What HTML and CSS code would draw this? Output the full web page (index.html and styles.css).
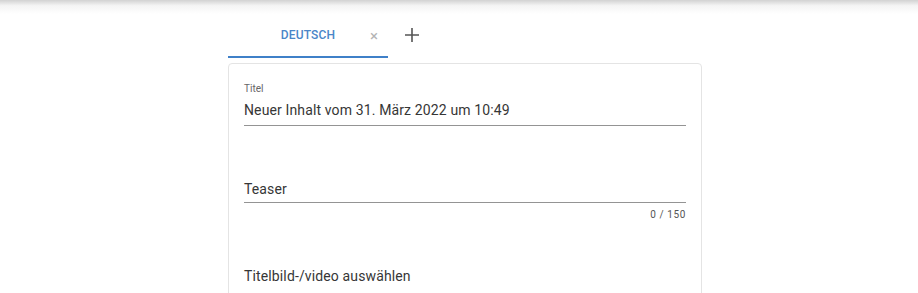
FILE: index.html
```html
<html>
<head>
<meta http-equiv="Content-Type" content="text/html; charset=utf-8" />
<link rel="stylesheet" href="styles.css">
</head>
<body>
<div class="headerShade"></div>
<div class="editor">
    <div class="tabBar">
        <div class="tab active">
            <span class="tabLabel">DEUTSCH</span>
            <span class="tabClose">&times;</span>
        </div>
        <div class="tabAdd">
            <svg width="14" height="14" viewBox="0 0 14 14"><path d="M7 0v14M0 7h14" stroke="#555" stroke-width="1.6" fill="none"/></svg>
        </div>
    </div>
    <div class="card">
        <div class="field titleField">
            <label class="fieldLabel">Titel</label>
            <div class="fieldInput">Neuer Inhalt vom 31. März 2022 um 10:49</div>
        </div>
        <div class="field teaserField">
            <div class="fieldInput">Teaser</div>
            <div class="counter">0 / 150</div>
        </div>
        <div class="mediaPick">Titelbild-/video auswählen</div>
    </div>
</div>
</body>
</html>
```

FILE: styles.css
```css
html {
    background-color: #FFF;
}
body {
    margin: 0;
    font-family: Roboto, 'Noto Sans', sans-serif;
    color: #363636;
    overflow: hidden;
}
.headerShade {
    height: 14px;
    background: linear-gradient(to bottom, #d2d2d2, #f4f4f4 40%, #fff);
}
.editor {
    margin-left: 228px;
    width: 474px;
}
.tabBar {
    display: flex;
    align-items: center;
    height: 44px;
}
.tab {
    position: relative;
    width: 160px;
    height: 42px;
    display: flex;
    align-items: center;
    justify-content: center;
    border-bottom: 2px solid #3f80c8;
}
.tabLabel {
    color: #4a86c8;
    font-size: 12px;
    font-weight: 500;
    letter-spacing: 0.2px;
}
.tabClose {
    position: absolute;
    left: 142px;
    top: 13px;
    font-size: 15px;
    color: #b4b4b4;
}
.tabAdd {
    display: flex;
    margin-left: 17px;
    margin-top: -2px;
}
.card {
    margin-top: 5px;
    border: 1px solid #e4e4e4;
    border-radius: 4px;
    padding: 0 15px;
    height: 260px;
}
.fieldLabel {
    display: block;
    font-size: 10px;
    line-height: 12px;
    color: #666;
}
.fieldInput {
    font-size: 14px;
    line-height: 20px;
    letter-spacing: 0.13px;
    border-bottom: 1px solid #949494;
}
.titleField {
    padding-top: 19px;
}
.titleField .fieldInput {
    margin-top: 5px;
    padding-bottom: 5px;
}
.teaserField {
    margin-top: 53px;
}
.teaserField .fieldInput {
    padding-bottom: 3px;
}
.counter {
    text-align: right;
    font-size: 10px;
    line-height: 12px;
    margin-top: 6px;
    color: #555;
    letter-spacing: 0.6px;
}
.mediaPick {
    margin-top: 45px;
    font-size: 14px;
    line-height: 20px;
    letter-spacing: 0.13px;
}
```
